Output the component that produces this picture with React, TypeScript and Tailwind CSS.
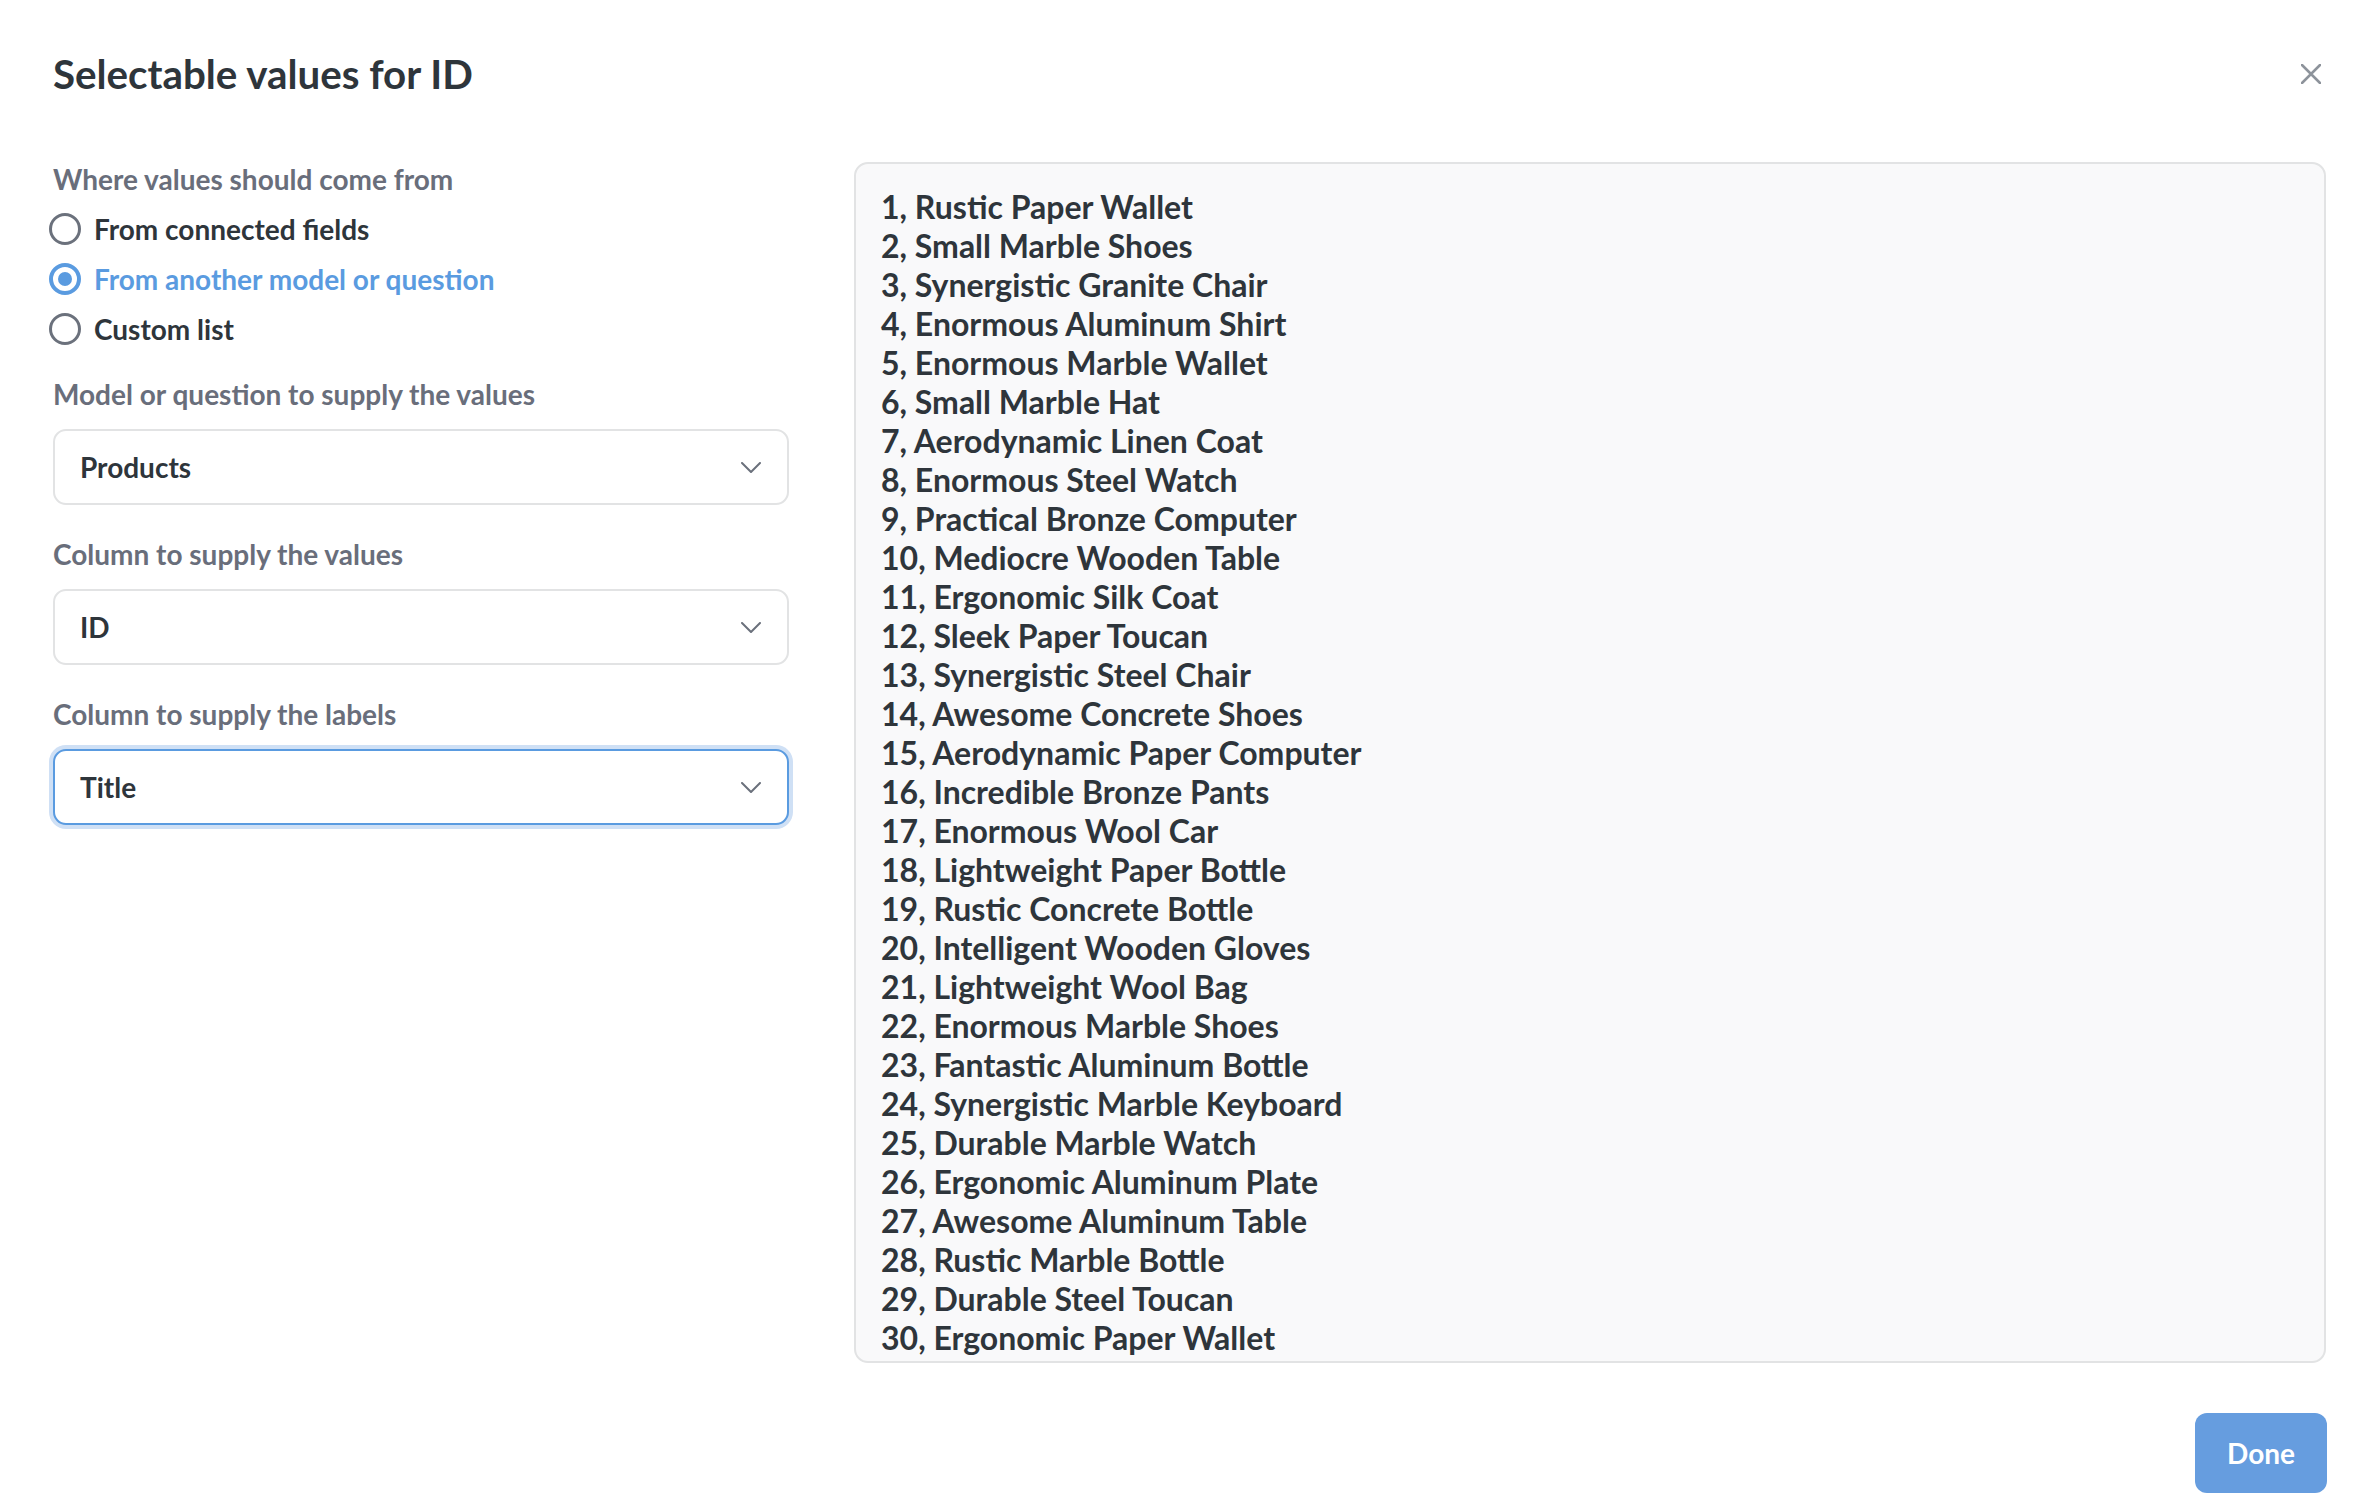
import { useState } from "react";

const products = [
  "Rustic Paper Wallet",
  "Small Marble Shoes",
  "Synergistic Granite Chair",
  "Enormous Aluminum Shirt",
  "Enormous Marble Wallet",
  "Small Marble Hat",
  "Aerodynamic Linen Coat",
  "Enormous Steel Watch",
  "Practical Bronze Computer",
  "Mediocre Wooden Table",
  "Ergonomic Silk Coat",
  "Sleek Paper Toucan",
  "Synergistic Steel Chair",
  "Awesome Concrete Shoes",
  "Aerodynamic Paper Computer",
  "Incredible Bronze Pants",
  "Enormous Wool Car",
  "Lightweight Paper Bottle",
  "Rustic Concrete Bottle",
  "Intelligent Wooden Gloves",
  "Lightweight Wool Bag",
  "Enormous Marble Shoes",
  "Fantastic Aluminum Bottle",
  "Synergistic Marble Keyboard",
  "Durable Marble Watch",
  "Ergonomic Aluminum Plate",
  "Awesome Aluminum Table",
  "Rustic Marble Bottle",
  "Durable Steel Toucan",
  "Ergonomic Paper Wallet",
];

const sources = [
  { id: "fields", label: "From connected fields" },
  { id: "card", label: "From another model or question" },
  { id: "static", label: "Custom list" },
];

function Chevron() {
  return (
    <svg width="20" height="11" viewBox="0 0 20 11" fill="none">
      <polyline
        points="1,1 10,10 19,1"
        stroke="#6B717C"
        strokeWidth="2"
        strokeLinecap="round"
        strokeLinejoin="round"
      />
    </svg>
  );
}

function Select({ value, focused }: { value: string; focused?: boolean }) {
  return (
    <button
      type="button"
      className={
        focused
          ? "w-full h-[76px] flex items-center justify-between pl-[25px] pr-[26px] rounded-[13px] bg-white border-2 border-[#5A9BE0] ring-4 ring-[#CFE0F5] text-[28px] font-bold text-[#2E353B]"
          : "w-full h-[76px] flex items-center justify-between pl-[25px] pr-[26px] rounded-[13px] bg-white border-2 border-[#E2E3E4] text-[28px] font-bold text-[#2E353B]"
      }
    >
      <span className="leading-[34px]">{value}</span>
      <Chevron />
    </button>
  );
}

function Field({ label, children }: { label: string; children: React.ReactNode }) {
  return (
    <div className="flex flex-col gap-[18px]">
      <label className="text-[28px] leading-[34px] font-bold text-[#696E7B]">{label}</label>
      {children}
    </div>
  );
}

export default function App() {
  const [source, setSource] = useState("card");

  return (
    <div
      className="w-[2380px] h-[1512px] bg-white flex flex-col pl-[53px] pr-[54px]"
      style={{ fontFamily: "Lato, 'Open Sans', sans-serif" }}
    >
      {/* Header */}
      <header className="flex items-center justify-between pt-[50px]">
        <h1 className="text-[40.3px] leading-[48px] font-bold text-[#2E353B]">
          Selectable values for ID
        </h1>
        <button type="button" className="w-[30px] h-[30px] flex items-center justify-center">
          <svg width="20" height="20" viewBox="0 0 20 20">
            <path d="M1 1 L19 19 M19 1 L1 19" stroke="#8D939B" strokeWidth="2.5" strokeLinecap="round" />
          </svg>
        </button>
      </header>

      {/* Body */}
      <main className="grid grid-cols-[736px_1fr] gap-[65px] mt-[64px]">
        <div className="flex flex-col">
          <label className="text-[28px] leading-[34px] font-bold text-[#696E7B]">
            Where values should come from
          </label>
          <div className="flex flex-col mt-[8px]">
            {sources.map((s) => {
              const checked = source === s.id;
              return (
                <label
                  key={s.id}
                  onClick={() => setSource(s.id)}
                  className="h-[50px] flex items-center gap-[13px] cursor-pointer -ml-[4px]"
                >
                  <span
                    className={
                      checked
                        ? "w-[32px] h-[32px] rounded-full border-[4px] border-[#5A9BE0] flex items-center justify-center"
                        : "w-[32px] h-[32px] rounded-full border-[3.5px] border-[#6B717C] flex items-center justify-center"
                    }
                  >
                    {checked && <span className="w-[14px] h-[14px] rounded-full bg-[#5A9BE0]" />}
                  </span>
                  <span
                    className={
                      checked
                        ? "text-[28px] leading-[34px] font-bold text-[#5A9BE0]"
                        : "text-[28px] leading-[34px] font-bold text-[#2E353B]"
                    }
                  >
                    {s.label}
                  </span>
                </label>
              );
            })}
          </div>

          <div className="flex flex-col gap-[32px] mt-[23px]">
            <Field label="Model or question to supply the values">
              <Select value="Products" />
            </Field>
            <Field label="Column to supply the values">
              <Select value="ID" />
            </Field>
            <Field label="Column to supply the labels">
              <Select value="Title" focused />
            </Field>
          </div>
        </div>

        <div className="h-[1201px] rounded-[14px] border-2 border-[#E2E3E4] bg-[#F9F9FA] overflow-hidden pt-[23px] pl-[25px]">
          {products.map((name, i) => (
            <div key={name} className="text-[32px] leading-[39px] font-bold text-[#2E353B]">
              {i + 1}, {name}
            </div>
          ))}
        </div>
      </main>

      {/* Footer */}
      <footer className="flex justify-end mt-[50px]">
        <button
          type="button"
          className="w-[132px] h-[80px] -mr-[1px] rounded-[12px] bg-[#669DDF] text-white text-[28px] font-bold"
        >
          Done
        </button>
      </footer>
    </div>
  );
}
